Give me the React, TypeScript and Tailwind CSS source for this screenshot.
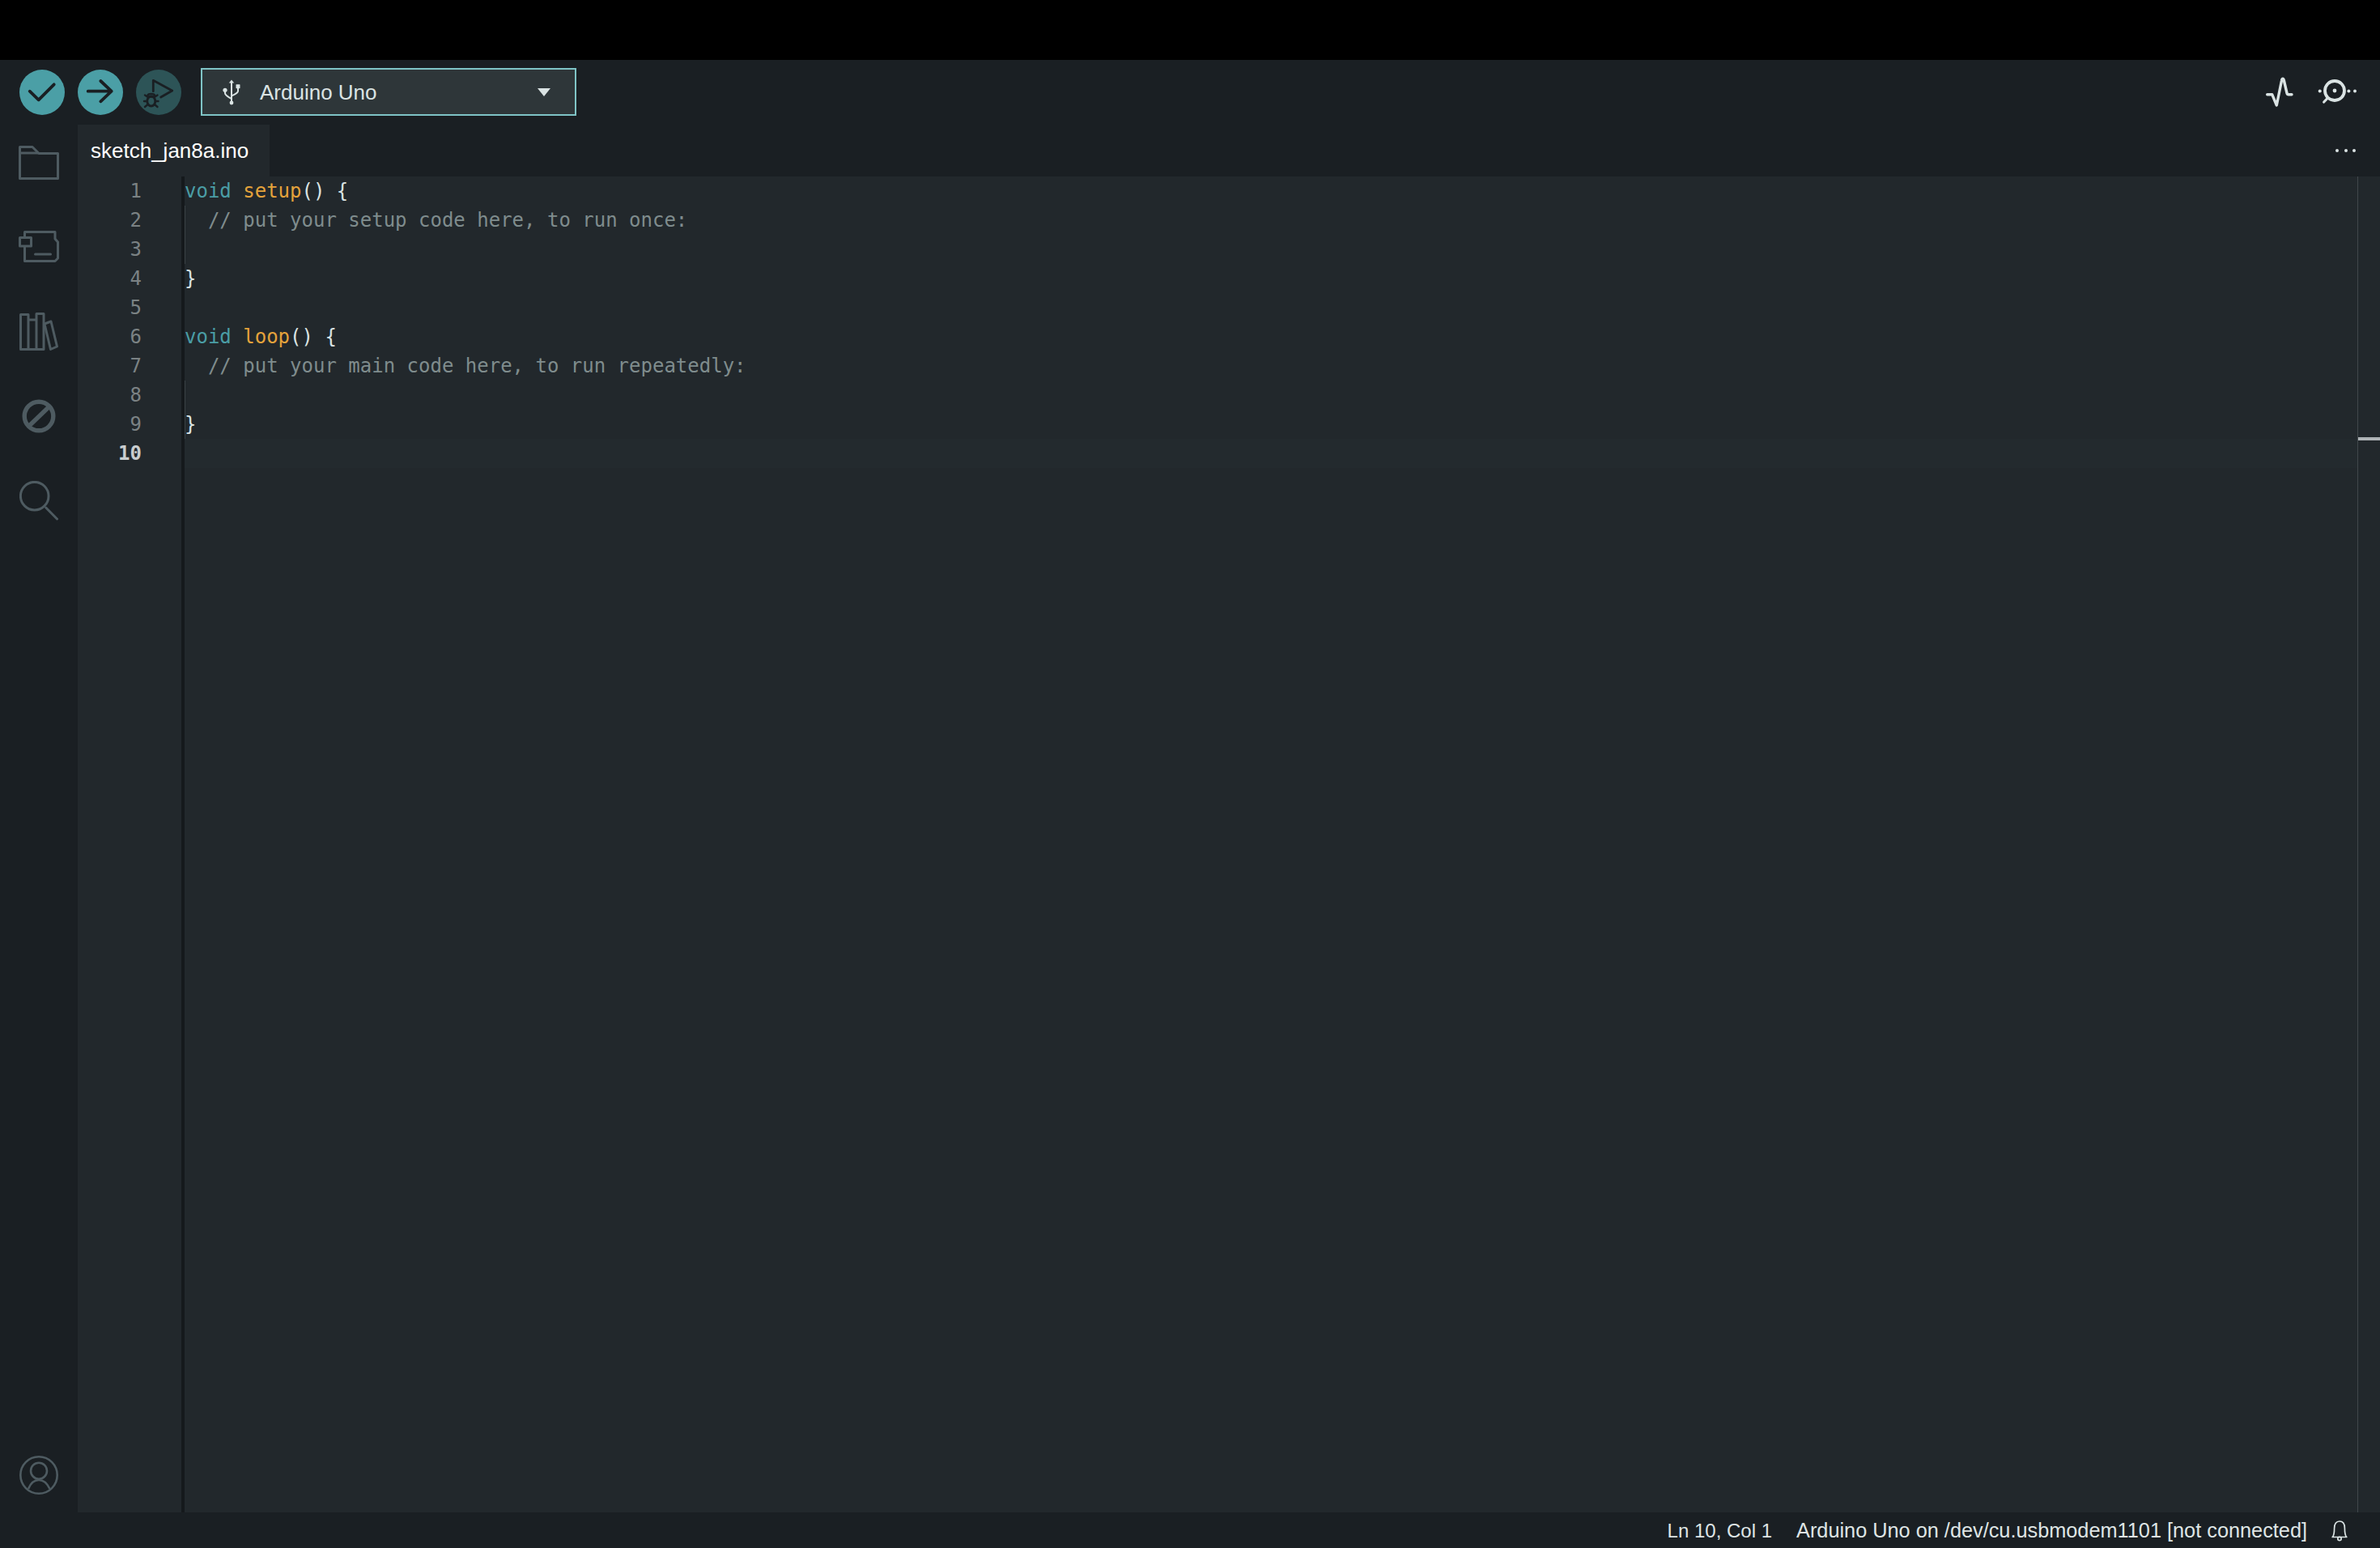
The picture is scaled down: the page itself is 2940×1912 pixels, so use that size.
import React from "react";

const mono = "font-['DejaVu_Sans_Mono',monospace]";
const sans = "font-['Liberation_Sans',Arial,sans-serif]";

function Check() {
  return (
    <svg width="56" height="56" viewBox="0 0 56 56" fill="none">
      <path d="M12.7 26.7L23.7 37.3L42.7 18.3" stroke="#1a1f23" strokeWidth="3.8" strokeLinecap="round" strokeLinejoin="round" />
    </svg>
  );
}
function Arrow() {
  return (
    <svg width="56" height="56" viewBox="0 0 56 56" fill="none">
      <path d="M12.7 26.7H41.7M28.3 14L41.7 26.7L28.3 39.3" stroke="#1a1f23" strokeWidth="3.8" strokeLinecap="round" strokeLinejoin="round" />
    </svg>
  );
}
function Debug() {
  return (
    <svg width="56" height="56" viewBox="0 0 56 56" fill="none" stroke="#1a1f23" strokeLinecap="round" strokeLinejoin="round">
      <path d="M21.3 26.7V13.3L44.7 26L30.7 34" strokeWidth="2.8" />
      <ellipse cx="18.8" cy="39" rx="5" ry="6" strokeWidth="2.8" />
      <path d="M14.5 31.5C15.5 29.5 22 29.5 23 31.5M14 33.5h9.5M13.5 39h-3.5M24 39h3.5M14 43.5l-3 2.5M23.5 43.5l3 2.5M14 33.5l-3-2M23.5 33.5l3-2" strokeWidth="2.4" />
    </svg>
  );
}
function Usb() {
  return (
    <svg width="24" height="32" viewBox="0 0 24 32" fill="none" stroke="#dae3e3" strokeWidth="2" strokeLinecap="round" strokeLinejoin="round">
      <path d="M12 3V28M4 14V17C4 20 8 21.5 12 24M20 10V14.5C20 17 16 18.5 12 20.5" />
      <circle cx="12" cy="29" r="2.4" fill="#dae3e3" stroke="none" />
      <path d="M12 0.5L15.2 4.6H8.8Z" fill="#dae3e3" stroke="none" />
      <circle cx="4" cy="13.3" r="2.6" fill="#dae3e3" stroke="none" />
      <rect x="17.5" y="6.2" width="5" height="5" rx="0.6" fill="#dae3e3" stroke="none" />
    </svg>
  );
}

const G = "#4e5b61";

function Folder() {
  return (
    <svg width="50" height="42" viewBox="0 0 50 42" fill="none" stroke={G} strokeWidth="3" strokeLinejoin="round">
      <path d="M1.5 40.5V1.5H17L25 9.5H48.5V40.5Z" />
      <path d="M1.5 9H25" />
    </svg>
  );
}
function Board() {
  return (
    <svg width="50" height="39" viewBox="0 0 50 39" fill="none" stroke={G} strokeWidth="3" strokeLinejoin="round">
      <path d="M7.5 8V1.5H45V10L48.5 14V34L45 37.5H7.5V19" />
      <rect x="1.5" y="8.5" width="14" height="10.5" />
      <path d="M20.5 29H39.5" strokeLinecap="round" />
    </svg>
  );
}
function Library() {
  return (
    <svg width="48" height="47" viewBox="0 0 48 47" fill="none" stroke={G} strokeWidth="3" strokeLinejoin="round">
      <path d="M1.5 2.5H11V45.5H1.5ZM11 9H21V45.5H11ZM21 1.5H30V45.5H21Z" />
      <path d="M31 14L39 11L46.5 42L38.5 45.5Z" />
    </svg>
  );
}
function Block() {
  return (
    <svg width="42" height="42" viewBox="0 0 42 42" fill="none" stroke={G} strokeWidth="5.4">
      <circle cx="21" cy="21" r="17.8" />
      <path d="M9.5 32.5L33 10" />
    </svg>
  );
}
function Search() {
  return (
    <svg width="48" height="49" viewBox="0 0 48 49" fill="none" stroke={G} strokeWidth="3" strokeLinecap="round">
      <circle cx="18.7" cy="18.7" r="17.3" />
      <path d="M32.7 33L46.5 47" />
    </svg>
  );
}
function User() {
  return (
    <svg width="48" height="48" viewBox="0 0 48 48" fill="none" stroke={G} strokeWidth="2.6">
      <circle cx="24" cy="24" r="22.7" />
      <circle cx="24" cy="18.7" r="10" />
      <path d="M11 41C14 33.5 19 30 24 30C29 30 34 33.5 37.5 41" />
    </svg>
  );
}
function Plotter() {
  return (
    <svg width="34" height="38" viewBox="0 0 34 38" fill="none" stroke="#dae3e3" strokeWidth="3.4" strokeLinecap="round" strokeLinejoin="round">
      <path d="M1.7 22.7H7.7L13.3 36L19.5 5.5C20 2.5 21.8 2.5 22.4 5.5L26 21C26.4 22.7 27 22.7 28 22.7H32" />
    </svg>
  );
}
function Monitor() {
  return (
    <svg width="50" height="34" viewBox="0 0 50 34" fill="none" stroke="#dae3e3">
      <circle cx="22" cy="16" r="12" strokeWidth="3.8" />
      <circle cx="22" cy="16" r="2.4" fill="#dae3e3" stroke="none" />
      <path d="M13 25.5L8.7 30" strokeWidth="3.2" strokeLinecap="round" />
      <circle cx="3.7" cy="16.5" r="2" fill="#dae3e3" stroke="none" />
      <circle cx="39.4" cy="16.5" r="2" fill="#dae3e3" stroke="none" />
      <circle cx="47" cy="16.5" r="2" fill="#dae3e3" stroke="none" />
    </svg>
  );
}
function Bell() {
  return (
    <svg width="20" height="26" viewBox="0 0 20 26" fill="none" stroke="#dae3e3" strokeWidth="1.7" strokeLinejoin="round">
      <path d="M1.2 20.5C3 19 3.6 17 3.6 9.5C3.6 4 6 1 10 1C14 1 16.4 4 16.4 9.5C16.4 17 17 19 18.8 20.5Z" />
      <circle cx="10" cy="22.5" r="2.2" />
    </svg>
  );
}

const lines: React.ReactNode[] = [
  <><span className="text-[#4a9da5]">void</span> <span className="text-[#e5a33b]">setup</span>() {"{"}</>,
  <span className="text-[#7f8c8d]">  // put your setup code here, to run once:</span>,
  "",
  "}",
  "",
  <><span className="text-[#4a9da5]">void</span> <span className="text-[#e5a33b]">loop</span>() {"{"}</>,
  <span className="text-[#7f8c8d]">  // put your main code here, to run repeatedly:</span>,
  "",
  "}",
  "",
];

export default function App() {
  return (
    <div className={`flex h-[1912px] w-[2940px] flex-col overflow-hidden bg-[#1a1f23] ${sans}`}>
      <div className="h-[74px] shrink-0 bg-black" />
      <div className="flex h-[80px] shrink-0 items-start pt-[10px] pl-[24px] pr-[28px]">
        <div className="mt-[2px] flex gap-[16px]">
          <div className="h-[56px] w-[56px] rounded-full bg-[#4b9fa6]"><Check /></div>
          <div className="h-[56px] w-[56px] rounded-full bg-[#4b9fa6]"><Arrow /></div>
          <div className="h-[56px] w-[56px] rounded-full bg-[#2d5457]"><Debug /></div>
        </div>
        <div className="ml-[24px] flex h-[59px] w-[464px] items-center border-2 border-[#7fc4c6] bg-[#2e3639] pl-[24px] pr-[30px] text-[26px] text-[#dae3e3]">
          <Usb />
          <span className="ml-[23px] flex-1 pt-[1px]">Arduino Uno</span>
          <div className="h-0 w-0 border-x-[8px] border-t-[10px] border-x-transparent border-t-[#dae3e3]" />
        </div>
        <div className="flex-1" />
        <div className="mt-[10px] flex items-center gap-[29px]">
          <Plotter />
          <Monitor />
        </div>
      </div>
      <div className="flex min-h-0 flex-1">
        <div className="flex w-[96px] shrink-0 flex-col items-center pt-[26px] pb-[66px]">
          <Folder />
          <div className="mt-[63px]"><Board /></div>
          <div className="mt-[62px]"><Library /></div>
          <div className="mt-[60px]"><Block /></div>
          <div className="mt-[59px]"><Search /></div>
          <div className="flex-1" />
          <User />
        </div>
        <div className="flex min-w-0 flex-1 flex-col">
          <div className="flex h-[64px] shrink-0 items-start">
            <div className="flex h-[64px] w-[237px] items-center bg-[#22282c] pl-[16px] text-[26px] text-white">sketch_jan8a.ino</div>
            <div className="flex-1" />
            <div className="mr-[30px] mt-[30px] flex gap-[6.5px]">
              <div className="h-[4px] w-[4px] rounded-full bg-[#dae3e3]" />
              <div className="h-[4px] w-[4px] rounded-full bg-[#dae3e3]" />
              <div className="h-[4px] w-[4px] rounded-full bg-[#dae3e3]" />
            </div>
          </div>
          <div className={`flex min-h-0 flex-1 bg-[#22282c] text-[24px] leading-[36px] ${mono}`}>
            <div className="w-[128px] shrink-0 pr-[49px] text-right text-[#7b8284]">
              {lines.map((_, i) => (
                <div key={i} className={i === 9 ? "h-[36px] font-bold text-[#c9cdce]" : "h-[36px]"}>{i + 1}</div>
              ))}
            </div>
            <div className="flex min-w-0 flex-1 border-l-4 border-[#15191c]">
              <div className="relative min-w-0 flex-1 whitespace-pre text-[#dae3e3]">
                <div className="absolute left-0 top-[36px] h-[72px] w-px bg-[#3a4246]" />
                <div className="absolute left-0 top-[252px] h-[72px] w-px bg-[#3a4246]" />
                {lines.map((l, i) => (
                  <div key={i} className={i === 9 ? "h-[36px] bg-[#232a2e]" : "h-[36px]"}>{l}</div>
                ))}
              </div>
              <div className="relative w-[28px] shrink-0 border-l border-[#41484c]">
                <div className="absolute left-0 right-0 top-[322px] h-[4px] bg-[#aeb3b6]" />
              </div>
            </div>
          </div>
          <div className="flex h-[44px] shrink-0 items-center justify-end gap-[30px] pr-[40px] pt-[1px] text-[#dfe5e5]">
            <span className="text-[24px]">Ln 10, Col 1</span>
            <span className="text-[25.3px]">Arduino Uno on /dev/cu.usbmodem1101 [not connected]</span>
            <Bell />
          </div>
        </div>
      </div>
    </div>
  );
}
